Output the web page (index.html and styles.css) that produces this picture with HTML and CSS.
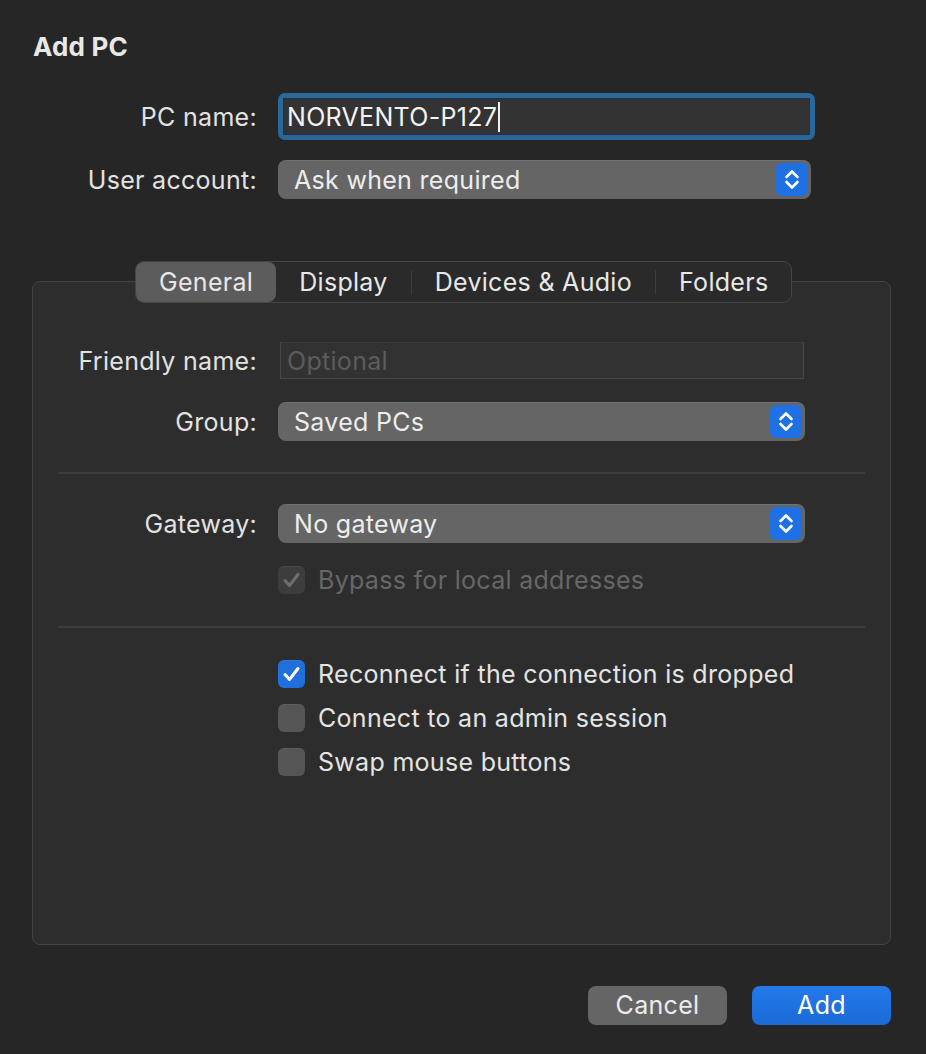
FILE: index.html
```html
<!DOCTYPE html>
<html>
<head>
<meta charset="utf-8">
<title>Add PC</title>
<link rel="stylesheet" href="styles.css">
</head>
<body>
<div class="dialog">
  <h1 class="title">Add PC</h1>

  <div class="form top-form">
    <div class="lbl">PC name:</div>
    <div class="focus-ring">
      <div class="textfield"><span>NORVENTO-P127</span><span class="caret"></span></div>
    </div>
    <div class="lbl">User account:</div>
    <div class="popup popup-wide">
      <span>Ask when required</span>
      <span class="stepper"><svg width="32" height="33" viewBox="0 0 32 33"><path d="M10.5 14 L16 8.5 L21.5 14 M10.5 19 L16 24.5 L21.5 19" fill="none" stroke="#fff" stroke-width="2.6" stroke-linecap="round" stroke-linejoin="round"/></svg></span>
    </div>
  </div>

  <div class="tabbox">
    <div class="tabs">
      <div class="tab active">General</div>
      <div class="tab">Display</div>
      <div class="tab-sep"></div>
      <div class="tab">Devices &amp; Audio</div>
      <div class="tab-sep"></div>
      <div class="tab">Folders</div>
    </div>
    <div class="box">
      <div class="form box-form">
        <div class="lbl">Friendly name:</div>
        <div class="plainfield"><span class="placeholder">Optional</span></div>
        <div class="lbl">Group:</div>
        <div class="popup">
          <span>Saved PCs</span>
          <span class="stepper"><svg width="32" height="33" viewBox="0 0 32 33"><path d="M10.5 14 L16 8.5 L21.5 14 M10.5 19 L16 24.5 L21.5 19" fill="none" stroke="#fff" stroke-width="2.6" stroke-linecap="round" stroke-linejoin="round"/></svg></span>
        </div>
      </div>
      <div class="sep-line first"></div>
      <div class="form box-form gateway-form">
        <div class="lbl">Gateway:</div>
        <div class="popup">
          <span>No gateway</span>
          <span class="stepper"><svg width="32" height="33" viewBox="0 0 32 33"><path d="M10.5 14 L16 8.5 L21.5 14 M10.5 19 L16 24.5 L21.5 19" fill="none" stroke="#fff" stroke-width="2.6" stroke-linecap="round" stroke-linejoin="round"/></svg></span>
        </div>
        <div></div>
        <div class="check-row disabled">
          <span class="checkbox checked-disabled"><svg width="27" height="28" viewBox="0 0 27 28"><path d="M7 14.5 L11.5 19.5 L20 8.5" fill="none" stroke="#6e6e6e" stroke-width="3" stroke-linecap="round" stroke-linejoin="round"/></svg></span>
          <span>Bypass for local addresses</span>
        </div>
      </div>
      <div class="sep-line second"></div>
      <div class="checks">
        <div class="check-row">
          <span class="checkbox checked"><svg width="27" height="28" viewBox="0 0 27 28"><path d="M7 14.5 L11.5 19.5 L20 8.5" fill="none" stroke="#fff" stroke-width="3" stroke-linecap="round" stroke-linejoin="round"/></svg></span>
          <span>Reconnect if the connection is dropped</span>
        </div>
        <div class="check-row">
          <span class="checkbox"></span>
          <span>Connect to an admin session</span>
        </div>
        <div class="check-row">
          <span class="checkbox"></span>
          <span>Swap mouse buttons</span>
        </div>
      </div>
    </div>
  </div>

  <div class="footer">
    <div class="btn btn-cancel">Cancel</div>
    <div class="btn btn-add">Add</div>
  </div>
</div>
</body>
</html>
```

FILE: styles.css
```css
* {
  box-sizing: border-box;
  margin: 0;
  padding: 0;
}

html,
body {
  background: #262626;
}

body {
  width: 926px;
  height: 1054px;
  overflow: hidden;
  font-family: Inter, "Liberation Sans", Arial, sans-serif;
  font-size: 25px;
  letter-spacing: 0.3px;
  color: #e2e2e2;
}

.dialog {
  padding-top: 31px;
}

.title {
  font-size: 26px;
  font-weight: 700;
  line-height: 32px;
  margin-left: 33px;
  letter-spacing: 0.2px;
  color: #e8e8e8;
}

.form {
  display: grid;
  column-gap: 21px;
  align-items: center;
}

.top-form {
  grid-template-columns: 257px 537px;
  margin-top: 30px;
  row-gap: 20px;
}

.lbl {
  text-align: right;
  line-height: 32px;
  white-space: nowrap;
}

.focus-ring {
  width: 537px;
  padding: 5px;
  border-radius: 7px;
  background: #2a679a;
}

.textfield {
  height: 37px;
  background: #333333;
  border: 1px solid #1d3347;
  display: flex;
  align-items: center;
  padding-left: 3px;
  color: #f3f3f3;
}

.caret {
  width: 2px;
  height: 30px;
  background: #f0f0f0;
  margin-left: 1px;
}

.popup {
  width: 527px;
  height: 39px;
  background: #656565;
  border-radius: 8px;
  display: flex;
  align-items: center;
  justify-content: space-between;
  padding: 0 3px 0 16px;
  color: #ededed;
  box-shadow: inset 0 1px 0 rgba(255, 255, 255, 0.08);
}

.popup-wide {
  width: 533px;
}

.stepper {
  width: 32px;
  height: 33px;
  border-radius: 6px;
  background: #1f71e3;
  display: flex;
}

.tabbox {
  margin-top: 62px;
  width: 859px;
  margin-left: 32px;
}

.tabs {
  position: relative;
  z-index: 1;
  display: flex;
  align-items: center;
  width: fit-content;
  margin: 0 0 -22px 103px;
  height: 42px;
  border: 1px solid #464646;
  border-radius: 9px;
  background: #2a2a2a;
}

.tab {
  height: 40px;
  line-height: 40px;
  padding: 0 23px;
  color: #e8e8e8;
  border-radius: 8px;
  white-space: nowrap;
}

.tab.active {
  background: #5c5c5c;
}

.tab-sep {
  width: 1px;
  height: 24px;
  background: #3c3c3c;
}

.box {
  height: 664px;
  border: 1px solid #444444;
  border-radius: 8px;
  background: #2d2d2d;
  padding-top: 60px;
}

.box-form {
  grid-template-columns: 224px 527px;
  row-gap: 23px;
}

.plainfield {
  margin-left: 2px;
  width: 524px;
  height: 37px;
  background: #323232;
  border: 1px solid #474747;
  border-top-color: #3b3b3b;
  display: flex;
  align-items: center;
  padding-left: 6px;
}

.placeholder {
  color: #5c5c5c;
}

.sep-line {
  height: 2px;
  background: #3d3d3d;
  margin: 0 25px;
}

.sep-line.first {
  margin-top: 31px;
}

.gateway-form {
  margin-top: 30px;
}

.sep-line.second {
  margin-top: 32px;
}

.checks {
  margin-top: 32px;
  padding-left: 245px;
  display: flex;
  flex-direction: column;
  gap: 16px;
}

.check-row {
  display: flex;
  align-items: center;
  gap: 13px;
  height: 28px;
  line-height: 28px;
  color: #e4e4e4;
  white-space: nowrap;
}

.check-row.disabled {
  color: #676767;
}

.checkbox {
  width: 27px;
  height: 28px;
  border-radius: 6px;
  background: #555555;
  display: flex;
  flex: none;
  box-shadow: inset 0 1px 0 rgba(255, 255, 255, 0.06);
}

.checkbox.checked {
  background: #1f6fdd;
}

.checkbox.checked-disabled {
  background: #3d3d3d;
}

.footer {
  margin-top: 41px;
  display: flex;
  justify-content: flex-end;
  gap: 25px;
  padding-right: 35px;
}

.btn {
  width: 139px;
  height: 39px;
  border-radius: 8px;
  text-align: center;
  line-height: 39px;
  color: #ececec;
}

.btn-cancel {
  background: #656565;
}

.btn-add {
  background: linear-gradient(#2478e8, #1b6bd8);
  color: #ffffff;
}
```
